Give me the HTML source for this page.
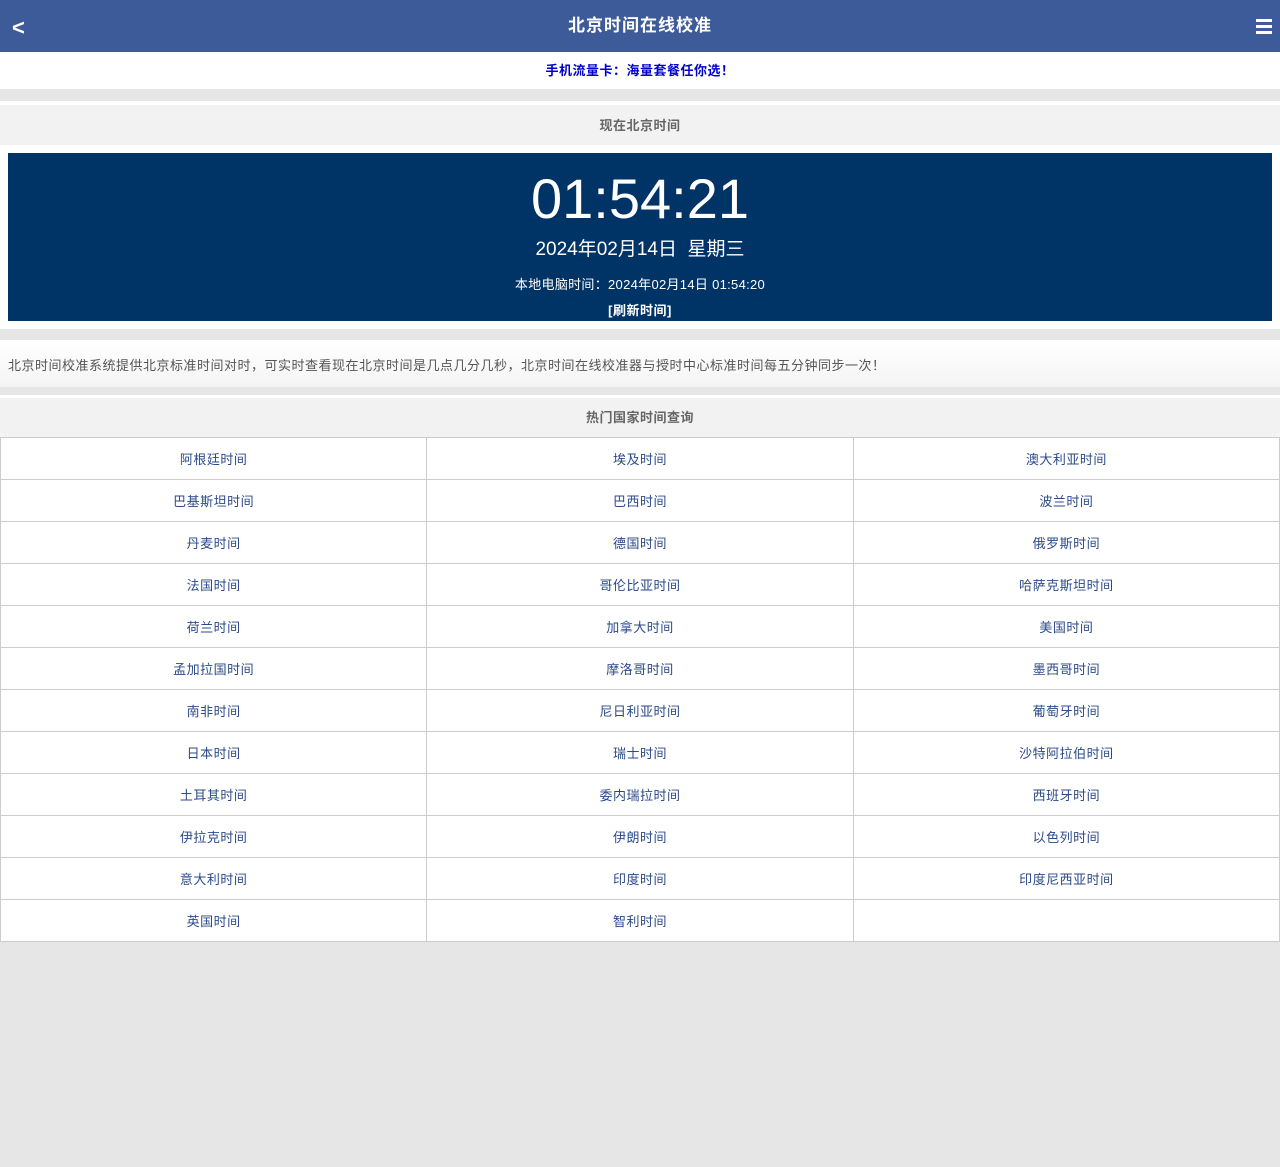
<!DOCTYPE html><html><head><meta charset="utf-8"><style>
body{margin:0;background:#e6e6e6;font-family:"Liberation Sans","Noto Sans CJK SC",sans-serif;letter-spacing:0.5px}
.hd{height:52px;background:#3d5a99;color:#fff;position:relative;text-align:center;line-height:52px;font-size:17px;font-weight:bold;letter-spacing:1px}
.hd .b{position:absolute;left:12px;top:2px;font-size:22px}
.hd .m{position:absolute;right:8px;top:19px;width:16px}
.hd .m i{display:block;height:3px;background:#fff;margin-bottom:3px}
.ad{height:37px;background:#fff;text-align:center;line-height:38px;font-size:13px;font-weight:bold;color:#0000cc}
.g1{height:12px}
.w4{height:4px;background:#fff}
.sh{height:40px;background:#f2f2f2;text-align:center;line-height:42px;font-size:13px;font-weight:bold;color:#666}
.cw{background:#fff;padding:8px 8px 8px}
.clk{height:168px;background:#003366;color:#fff;text-align:center;letter-spacing:0}
.t{font-size:56px;padding-top:13px;line-height:66px}
.d{font-size:19px;line-height:26px;margin-top:5px}
.l{font-size:13px;margin-top:12px;line-height:20px;letter-spacing:0.3px}
.r{font-size:13px;font-weight:bold;margin-top:6px;line-height:20px;letter-spacing:0.5px}
.g2{height:11px}
.ds{height:47px;background:linear-gradient(#fff,#f4f4f4);font-size:13px;color:#555;line-height:52px;padding-left:8px}
.g3{height:8px}
.w3{height:3px;background:#fff}
table{width:100%;border-collapse:collapse;background:#fff}
td{width:33.33%;height:41px;border:1px solid #ccc;text-align:center;font-size:13px;color:#2b4a8a;padding:0}
</style></head><body>
<div class="hd"><span class="b">&lt;</span>北京时间在线校准<div class="m"><i></i><i></i><i></i></div></div>
<div class="ad">手机流量卡：海量套餐任你选！</div>
<div class="g1"></div><div class="w4"></div>
<div class="sh">现在北京时间</div>
<div class="cw"><div class="clk"><div class="t">01:54:21</div><div class="d">2024年02月14日&nbsp; 星期三</div><div class="l">本地电脑时间：2024年02月14日 01:54:20</div><div class="r">[刷新时间]</div></div></div>
<div class="g2"></div>
<div class="ds">北京时间校准系统提供北京标准时间对时，可实时查看现在北京时间是几点几分几秒，北京时间在线校准器与授时中心标准时间每五分钟同步一次！</div>
<div class="g3"></div><div class="w3"></div>
<div class="sh" style="height:39px;line-height:40px">热门国家时间查询</div>
<table>
<tr><td>阿根廷时间</td><td>埃及时间</td><td>澳大利亚时间</td></tr>
<tr><td>巴基斯坦时间</td><td>巴西时间</td><td>波兰时间</td></tr>
<tr><td>丹麦时间</td><td>德国时间</td><td>俄罗斯时间</td></tr>
<tr><td>法国时间</td><td>哥伦比亚时间</td><td>哈萨克斯坦时间</td></tr>
<tr><td>荷兰时间</td><td>加拿大时间</td><td>美国时间</td></tr>
<tr><td>孟加拉国时间</td><td>摩洛哥时间</td><td>墨西哥时间</td></tr>
<tr><td>南非时间</td><td>尼日利亚时间</td><td>葡萄牙时间</td></tr>
<tr><td>日本时间</td><td>瑞士时间</td><td>沙特阿拉伯时间</td></tr>
<tr><td>土耳其时间</td><td>委内瑞拉时间</td><td>西班牙时间</td></tr>
<tr><td>伊拉克时间</td><td>伊朗时间</td><td>以色列时间</td></tr>
<tr><td>意大利时间</td><td>印度时间</td><td>印度尼西亚时间</td></tr>
<tr><td>英国时间</td><td>智利时间</td><td></td></tr>
</table>
</body></html>
